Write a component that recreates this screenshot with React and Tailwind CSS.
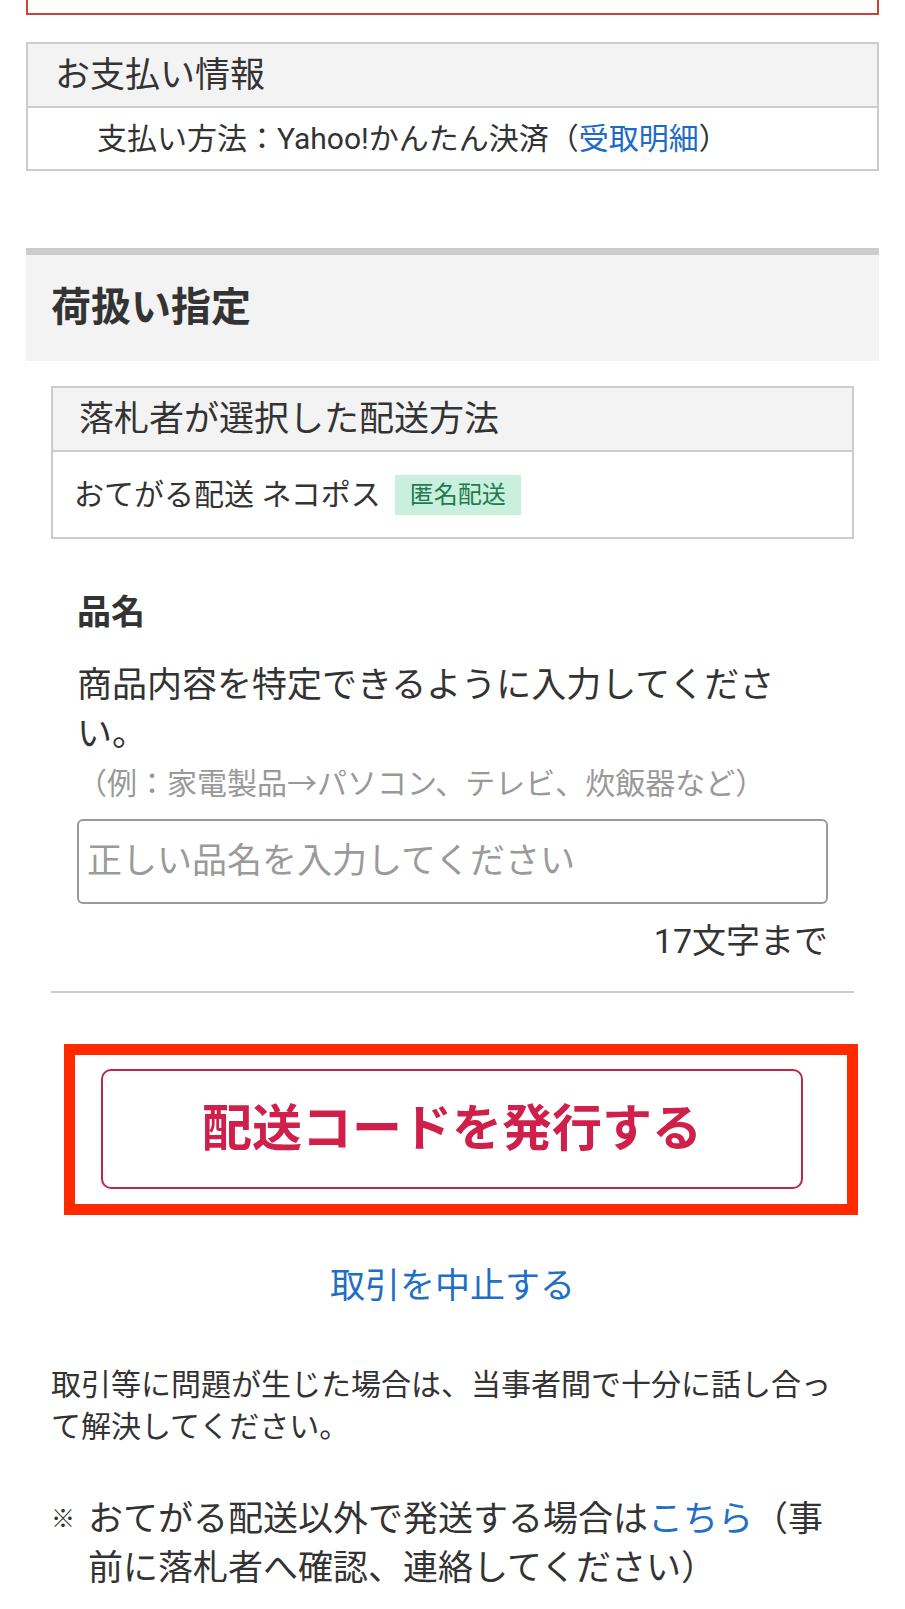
export default function App() {
  const font = { fontFamily: 'Roboto, "Noto Sans CJK JP", "Noto Sans", sans-serif' };
  return (
    <div className="w-[905px] min-h-[1609px] bg-white text-[#333] overflow-hidden" style={font}>
      {/* bottom of previous outlined box */}
      <div className="mx-[26px] h-[15px] border-x-2 border-b-2 border-[#c9413b] bg-[#fffdfc]" />

      {/* Payment info */}
      <div className="mx-[26px] mt-[27px] border-2 border-[#cccccc]">
        <div className="h-[64px] bg-[#f3f3f3] flex items-center pl-[27px] text-[35px] leading-none border-b-2 border-[#cccccc]">
          お支払い情報
        </div>
        <div className="h-[61px] flex items-center pl-[69px] text-[30px] leading-none">
          支払い方法：Yahoo!かんたん決済（<span className="text-[#1e6bc4]">受取明細</span>）
        </div>
      </div>

      {/* Handling section header */}
      <div className="mx-[26px] mt-[77px] h-[7px] bg-[#cccccc]" />
      <div className="mx-[26px] h-[106px] bg-[#f3f3f3] flex items-center pl-[25px] text-[40px] font-bold leading-none">
        荷扱い指定
      </div>

      {/* Shipping method box */}
      <div className="mx-[51px] mt-[25px] border-2 border-[#cccccc]">
        <div className="h-[64px] bg-[#f3f3f3] flex items-center pl-[26px] text-[35px] leading-none border-b-2 border-[#cccccc]">
          落札者が選択した配送方法
        </div>
        <div className="h-[85px] flex items-center pl-[21px] text-[30px] leading-none">
          <span>おてがる配送 ネコポス</span>
          <span className="ml-[14px] h-[40px] px-[15px] flex items-center bg-[#c8f0dc] text-[#1f7a4f] text-[24px] leading-none">
            匿名配送
          </span>
        </div>
      </div>

      {/* Item name form */}
      <div className="mx-[77px] mt-[48px]">
        <div className="text-[34px] font-bold leading-[50px]">品名</div>
        <p className="mt-[24px] max-w-[715px] text-[35px] leading-[49px]">
          商品内容を特定できるように入力してください。
        </p>
        <p className="mt-[4px] text-[30px] leading-[42px] text-[#999999]">
          （例：家電製品→パソコン、テレビ、炊飯器など）
        </p>
        <input
          type="text"
          placeholder="正しい品名を入力してください"
          className="mt-[14px] block w-full h-[85px] border-2 border-[#9a9a9a] rounded-[6px] px-[8px] text-[35px] text-[#333] placeholder:text-[#9a9a9a] outline-none bg-white"
          style={font}
        />
        <div className="mt-[13px] text-right text-[34px] leading-[48px]">17文字まで</div>
      </div>

      <div className="mx-[51px] mt-[26px] h-[2px] bg-[#cccccc]" />

      {/* Highlighted button */}
      <div className="ml-[64px] mt-[51px] w-[794px] border-[11px] border-[#ff2a00] pt-[14px] pb-[15px] pl-[26px]">
        <button
          type="button"
          className="w-[702px] h-[120px] border-2 border-[#b8294f] rounded-[10px] bg-white flex items-center justify-center text-[50px] font-bold text-[#cf1f4b] leading-none"
          style={font}
        >
          配送コードを発行する
        </button>
      </div>

      <div className="mt-[47px] text-center text-[35px] leading-[50px] text-[#1f6fc5]">取引を中止する</div>

      <p className="mx-[51px] mt-[52px] text-[30px] leading-[42px]">
        取引等に問題が生じた場合は、当事者間で十分に話し合って解決してください。
      </p>

      <div className="mx-[51px] mt-[47px] flex">
        <span className="w-[37px] shrink-0 text-[24px] leading-[49px]">※</span>
        <p className="text-[35px] leading-[49px]">
          おてがる配送以外で発送する場合は<span className="text-[#1f6fc5]">こちら</span>（事前に落札者へ確認、連絡してください）
        </p>
      </div>
    </div>
  );
}
